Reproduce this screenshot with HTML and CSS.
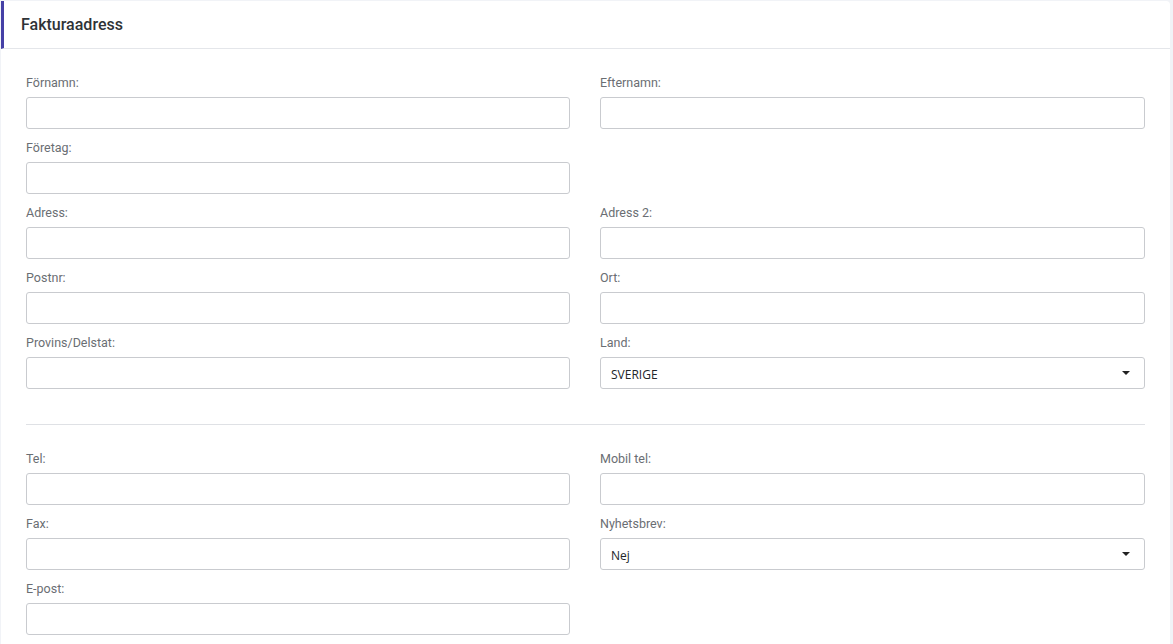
FILE: index.html
```html
<!DOCTYPE html>
<html lang="sv">
<head>
  <meta charset="UTF-8">
  <meta name="viewport" content="width=device-width, initial-scale=1.0">
  <title>Fakturaadress</title>
  <link rel="stylesheet" href="styles.css">
</head>
<body>

  <div class="card">
    <div class="card-header">
      <h2>Fakturaadress</h2>
    </div>

    <form class="card-body">
      <div class="form-grid">
        <div class="field">
          <label for="firstname">Förnamn:</label>
          <input type="text" id="firstname">
        </div>
        <div class="field">
          <label for="lastname">Efternamn:</label>
          <input type="text" id="lastname">
        </div>

        <div class="field">
          <label for="company">Företag:</label>
          <input type="text" id="company">
        </div>
        <div class="field"></div>

        <div class="field">
          <label for="address">Adress:</label>
          <input type="text" id="address">
        </div>
        <div class="field">
          <label for="address2">Adress 2:</label>
          <input type="text" id="address2">
        </div>

        <div class="field">
          <label for="zip">Postnr:</label>
          <input type="text" id="zip">
        </div>
        <div class="field">
          <label for="city">Ort:</label>
          <input type="text" id="city">
        </div>

        <div class="field">
          <label for="state">Provins/Delstat:</label>
          <input type="text" id="state">
        </div>
        <div class="field">
          <label for="country">Land:</label>
          <div class="select-wrap">
            <select id="country">
              <option>SVERIGE</option>
              <option>NORGE</option>
              <option>DANMARK</option>
              <option>FINLAND</option>
            </select>
          </div>
        </div>
      </div>

      <hr class="divider">

      <div class="form-grid">
        <div class="field">
          <label for="phone">Tel:</label>
          <input type="text" id="phone">
        </div>
        <div class="field">
          <label for="mobile">Mobil tel:</label>
          <input type="text" id="mobile">
        </div>

        <div class="field">
          <label for="fax">Fax:</label>
          <input type="text" id="fax">
        </div>
        <div class="field">
          <label for="newsletter">Nyhetsbrev:</label>
          <div class="select-wrap">
            <select id="newsletter">
              <option>Nej</option>
              <option>Ja</option>
            </select>
          </div>
        </div>

        <div class="field">
          <label for="email">E-post:</label>
          <input type="email" id="email">
        </div>
      </div>
    </form>
  </div>

</body>
</html>
```

FILE: styles.css
```css
body {
  margin: 0;
  padding: 1px 3px 0 1px;
  background-color: #f1f3f7;
  font-family: Roboto, "Liberation Sans", Arial, sans-serif;
  height: 643px;
  overflow: hidden;
}

.card {
  background-color: #fff;
  border-radius: 0 4px 0 0;
  height: 100%;
}

/* Header with the purple accent on the left */
.card-header {
  height: 47px;
  border-left: 3px solid #4540a6;
  border-bottom: 1px solid #e4e6ea;
  padding-left: 17px;
  display: flex;
  align-items: center;
}

.card-header h2 {
  margin: 0;
  font-size: 16px;
  font-weight: 500;
  color: #2f3337;
}

.card-body {
  padding: 26px 25px 0 25px;
}

.form-grid {
  display: grid;
  grid-template-columns: 544px 1fr;
  column-gap: 30px;
  row-gap: 11px;
}

.field label {
  display: block;
  font-size: 12.5px;
  line-height: 16px;
  color: #6a6e73;
  margin-bottom: 6px;
}

.field input,
.field select {
  display: block;
  box-sizing: border-box;
  width: 100%;
  height: 32px;
  margin: 0;
  border: 1px solid #c9cbcf;
  border-radius: 3px;
  background-color: #fff;
  padding: 2px 10px 0 10px;
  font-family: "Open Sans", "DejaVu Sans", sans-serif;
  font-size: 12px;
  color: #212529;
  outline: none;
}

.field select {
  appearance: none;
  -webkit-appearance: none;
}

/* Caret for the selects */
.select-wrap {
  position: relative;
}

.select-wrap::after {
  content: "";
  position: absolute;
  right: 15px;
  top: 14px;
  border-left: 4px solid transparent;
  border-right: 4px solid transparent;
  border-top: 4px solid #222;
  pointer-events: none;
}

.divider {
  border: 0;
  border-top: 1px solid #dfe1e5;
  margin: 35px 0 26px 0;
}
```
